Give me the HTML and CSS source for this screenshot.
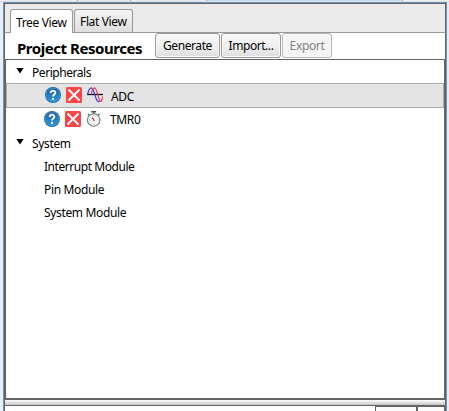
FILE: index.html
```html
<!DOCTYPE html>
<html lang="en">
<head>
<meta charset="utf-8">
<title>Project Resources</title>
<link rel="stylesheet" href="styles.css">
</head>
<body>
<svg width="0" height="0" class="defs" aria-hidden="true">
  <defs>
    <linearGradient id="blue" x2="0" y2="1"><stop stop-color="#1c5c9c"/><stop offset="1" stop-color="#2c9cdc"/></linearGradient>
    <symbol id="help" viewBox="0 0 16 16"><circle cx="8" cy="8" r="8" fill="#1d68a8"/><circle cx="8" cy="8" r="6.8" fill="url(#blue)" stroke="#62a9d8" stroke-width=".5"/><path d="M5.7 6C5.7 3 10.4 3.1 10.4 5.7C10.4 7.5 8 7.5 8 9.6" fill="none" stroke="#fff" stroke-width="1.8"/><circle cx="8" cy="11.9" r="1.1" fill="#fff"/></symbol>
    <symbol id="remove" viewBox="0 0 16 16"><rect width="16" height="16" rx="1.5" fill="#fb4444"/><path d="M2.5 2.5L13.5 13.5M13.5 2.5L2.5 13.5" stroke="#fff" stroke-width="1.8"/></symbol>
    <symbol id="wave" viewBox="0 0 16 16"><g fill="none" stroke-width="1.2"><path d="M0 7.5H16" stroke="#000" stroke-width="1.3"/><path d="M.5 7.5C1.5 3.5 2.8 .7 4.2 .8C6.3 1 7.8 8 9.3 12C10.3 14.8 11.6 15.3 12.6 13.7" stroke="#3939ee"/><path d="M4 7.5C5 3.5 6 .7 7.5 .8C9.5 1 10.7 8 12.1 12C13.5 16.7 15 14 15.6 9.5" stroke="#ee3c48"/></g></symbol>
    <symbol id="timer" viewBox="0 0 16 16"><path d="M5.2 .8H10.2M7.7 .8V3M2 3L3.1 4.1M13.4 3L12.3 4.1" stroke="#4d5558" stroke-width="1.5"/><circle cx="7.7" cy="9" r="6.3" fill="#f5f7f7" stroke="#777b7c" stroke-width="1.1"/><path d="M7.7 4V5.2M7.7 12.8V14M2.8 9H4M11.4 9H12.6" stroke="#a2b4b4"/><path d="M5.5 5.8L6.8 6.7L9.1 10L7.2 9.4Z" fill="#a31620"/></symbol>
  </defs>
</svg>
<div class="top"><i class="t1"></i><i class="t2"></i><i class="t3"></i><i class="t4"></i></div>
<main class="panel">
  <nav class="tabs"><div class="tab active">Tree View</div><div class="tab flat">Flat View</div></nav>
  <header class="toolbar">
    <h1>Project Resources</h1>
    <button class="generate">Generate</button><button class="import">Import...</button><button class="export" disabled>Export</button>
  </header>
  <section class="tree">
    <div class="row group"><b class="arrow"></b><span class="peripherals">Peripherals</span></div>
    <div class="row item selected"><svg><use href="#help"/></svg><svg><use href="#remove"/></svg><svg><use href="#wave"/></svg><span>ADC</span></div>
    <div class="row item timer"><svg><use href="#help"/></svg><svg><use href="#remove"/></svg><svg><use href="#timer"/></svg><span>TMR0</span></div>
    <div class="row group"><b class="arrow"></b><span>System</span></div>
    <div class="row leaf"><span class="interrupt">Interrupt Module</span></div>
    <div class="row leaf"><span>Pin Module</span></div>
    <div class="row leaf"><span>System Module</span></div>
  </section>
  <div class="splitter"></div>
  <footer class="bottom"><div class="box one"></div><div class="box two"></div></footer>
</main>
</body>
</html>
```
FILE: styles.css
```css
* { box-sizing: border-box; }
body { margin: 0; width: 449px; height: 411px; overflow: hidden; background: #e8eef3; color: #000; font: 12px/16px "Noto Sans", "Open Sans", sans-serif; letter-spacing: -.35px; }
.defs { position: absolute; }
.top { display: flex; height: 2px; padding-left: 4px; background: #f0f0f0; border-bottom: 1px solid #d5dde5; }
.top i { border-right: 1px solid #a0a8b0; background: #e7e9ec; }
.t1 { width: 74px; }
.t2 { width: 53px; }
.t3 { width: 76px; }
.top .t4 { width: 196px; background: #c8daf3; }
.panel { display: flex; flex-direction: column; width: 444px; height: 409px; margin-left: 3px; border: 1px solid #6d93b5; border-bottom: 0; background: #fff; }
.tabs { display: flex; align-items: flex-end; height: 30px; padding-left: 5px; background: #eaeaea; border: 1px solid #656366; border-bottom: 1px solid #999; }
.tab { height: 23px; border: 1px solid #999; border-bottom: 0; border-radius: 3px 3px 0 0; padding: 4px 0 0 5px; white-space: nowrap; background: linear-gradient(#f5f5f5, #dedede); }
.active { width: 63px; height: 24px; margin-bottom: -1px; padding-top: 5px; background: #fff; }
.flat { width: 59px; margin-left: 1px; }
.toolbar { display: flex; height: 26px; border: solid #656366; border-width: 0 1px; align-items: flex-start; }
h1 { width: 138px; margin: 6px 0 0 12px; font-size: 15px; line-height: 19px; letter-spacing: -.45px; white-space: nowrap; }
button { height: 25px; margin: 0 1px 0 0; padding: 1px 0 0; border: 1px solid #999; border-radius: 3px; background: linear-gradient(#f8f8f8, #f0f0f0 50%, #dedede); box-shadow: inset 0 0 0 1px #f9f9f9; color: #000; font: inherit; letter-spacing: inherit; white-space: nowrap; }
.generate { width: 65px; letter-spacing: -.42px; }
.import { width: 60px; letter-spacing: -.45px; }
.export { width: 50px; border-color: #b5b5b5; color: #838383; background: #f4f4f4; }
.tree { height: 341px; border: 2px solid #656366; border-top-width: 1px; }
.row { display: flex; align-items: center; height: 23px; white-space: nowrap; }
.group { padding-left: 10px; }
.group span { padding-top: 2px; }
.peripherals { letter-spacing: -.45px; }
.arrow { width: 8px; height: 6px; margin: 0 8px 2px 0; background: #000; clip-path: polygon(0 0, 100% 0, 50% 100%); }
.item { height: 25px; padding-left: 38px; }
.item svg { width: 16px; height: 16px; margin-right: 5px; }
.item span { margin-left: 3px; }
.selected { border: 1px solid #adadad; background: #e4e4e4; }
.selected svg { margin-bottom: 1px; }
.selected span { padding-top: 2px; }
.timer { height: 23px; }
.timer svg { margin-bottom: 1px; }
.leaf { padding: 2px 0 0 38px; }
.interrupt { letter-spacing: -.45px; }
.splitter { height: 6px; background: linear-gradient(#fff, #c6c4c6 5px, #656366 5px); border: solid #656366; border-width: 0 1px; }
.bottom { display: flex; flex: 1; justify-content: flex-end; border: solid #656366; border-width: 0 2px 0 1px; }
.box { border: 2px solid #656366; border-width: 1px 0 0 2px; background: #fafafa; }
.one { width: 41px; border-left-width: 1px; }
.two { width: 28px; }
```
